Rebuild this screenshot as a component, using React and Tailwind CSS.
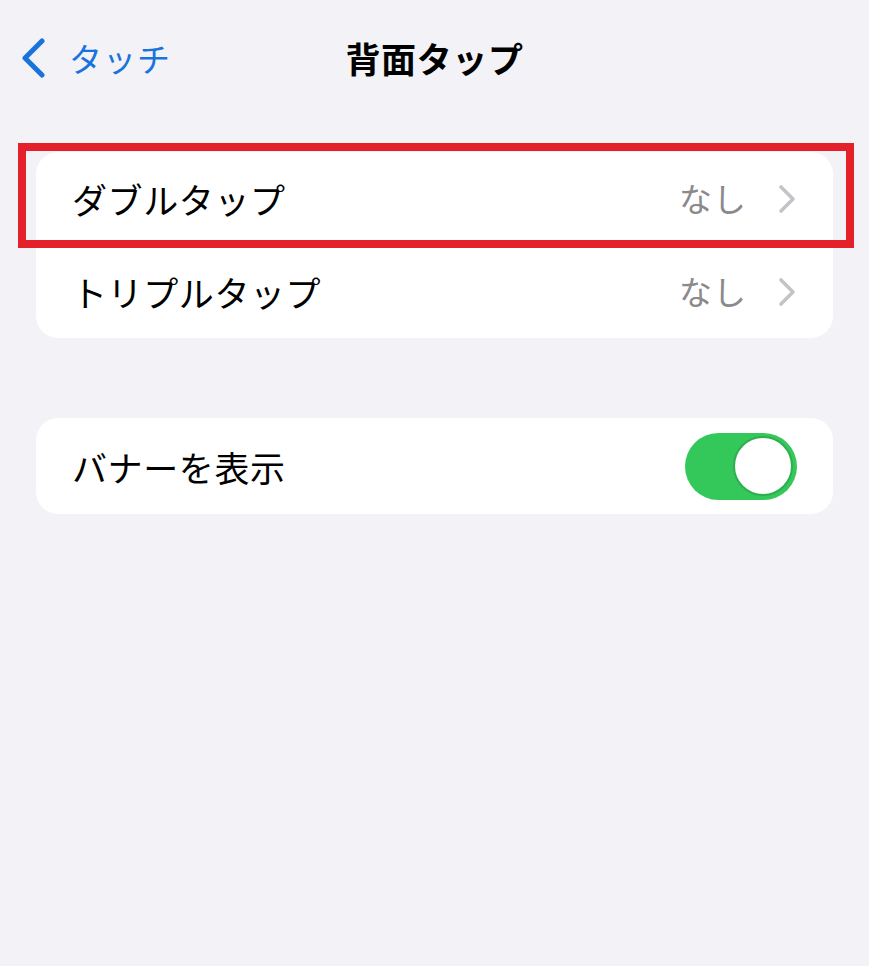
import React from "react";

const font = { fontFamily: '"Noto Sans CJK JP", "Noto Sans", sans-serif' };

function Chevron() {
  return (
    <svg width="20" height="30" viewBox="0 0 20 30" className="ml-[30px]">
      <path d="M4 3 L16 15 L4 27" fill="none" stroke="#c4c4c8" strokeWidth="3.6" strokeLinecap="round" strokeLinejoin="round" />
    </svg>
  );
}

function Row({ label, value }) {
  return (
    <div className="flex h-[93px] items-center justify-between pl-[36px] pr-[36px]">
      <span className="text-[35px] text-black leading-none tracking-[0.6px]">{label}</span>
      <div className="flex items-center">
        <span className="text-[33px] text-[#8a8a8e] leading-none tracking-[1px]">{value}</span>
        <Chevron />
      </div>
    </div>
  );
}

export default function App() {
  return (
    <div className="min-h-[966px] w-full bg-[#f2f2f7]" style={font}>
      <div className="relative flex h-[114px] items-center justify-center">
        <div className="absolute left-[20px] top-[38px] flex items-center">
          <svg width="26" height="40" viewBox="0 0 26 40">
            <path d="M22 3 L5 20 L22 37" fill="none" stroke="#1a72dc" strokeWidth="5" strokeLinecap="round" strokeLinejoin="round" />
          </svg>
          <span className="ml-[23px] text-[33px] text-[#1a72dc] leading-none tracking-[1px]">タッチ</span>
        </div>
        <span className="text-[35px] font-bold text-black leading-none tracking-[0.6px]">背面タップ</span>
      </div>

      <div className="mx-[36px] mt-[38px] rounded-[22px] bg-white">
        <div className="relative">
          <Row label="ダブルタップ" value="なし" />
          <div className="pointer-events-none absolute left-[-18px] right-[-21px] top-[-9px] h-[105px] border-[8px] border-[#e4202a]" />
        </div>
        <Row label="トリプルタップ" value="なし" />
      </div>

      <div className="mx-[36px] mt-[80px] flex h-[96px] items-center justify-between rounded-[22px] bg-white pl-[36px] pr-[36px]">
        <span className="text-[35px] text-black leading-none tracking-[0.6px]">バナーを表示</span>
        <div className="flex h-[67px] w-[112px] items-center justify-end rounded-full bg-[#34c759] pr-[4px]">
          <div className="h-[60px] w-[60px] rounded-full border-[2px] border-[#2fae50] bg-white" />
        </div>
      </div>
    </div>
  );
}
